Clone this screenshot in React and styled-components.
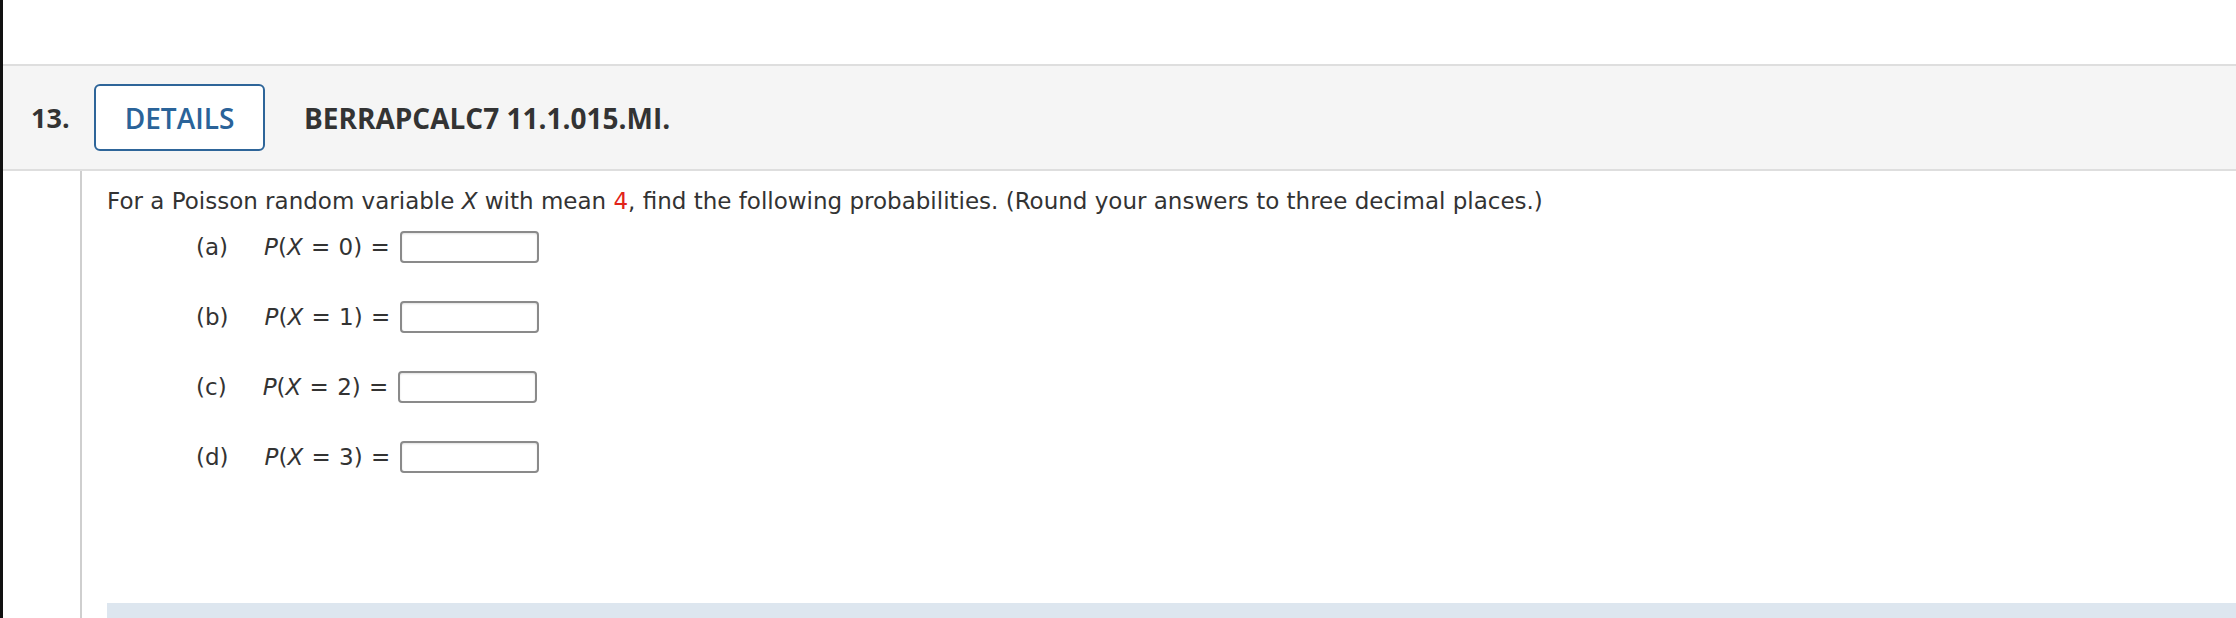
import React from "react";
import styled, { createGlobalStyle } from "styled-components";

const Global = createGlobalStyle`
  html, body { margin: 0; padding: 0; background: #fff; }
  body { font-family: "DejaVu Sans", Verdana, sans-serif; }
`;

const Page = styled.div`
  display: flex;
  height: 618px;
  overflow: hidden;
`;

const EdgeBar = styled.div`
  width: 3px;
  flex: 0 0 3px;
  background: #111;
`;

const Main = styled.div`
  flex: 1;
  display: flex;
  flex-direction: column;
  padding-top: 64px;
  min-width: 0;
`;

const Header = styled.div`
  display: flex;
  align-items: center;
  height: 103px;
  background: #f5f5f5;
  border-top: 2px solid #dedede;
  border-bottom: 2px solid #dedede;
  padding-left: 28px;
  font-family: "Open Sans", sans-serif;
  color: #333;
`;

const Number = styled.span`
  font-size: 27px;
  font-weight: 700;
  width: 63px;
`;

const DetailsButton = styled.button`
  box-sizing: border-box;
  width: 171px;
  height: 67px;
  border: 2px solid #2e6599;
  border-radius: 6px;
  background: #fff;
  color: #2a6399;
  font-family: "Open Sans", sans-serif;
  font-size: 28px;
  font-weight: 600;
  padding: 0;
  margin-right: 39px;
`;

const Title = styled.span`
  font-size: 28px;
  font-weight: 700;
`;

const Body = styled.div`
  flex: 1;
  display: flex;
  min-height: 0;
`;

const Gutter = styled.div`
  width: 77px;
  flex: 0 0 77px;
  border-right: 2px solid #cfcfcf;
`;

const Content = styled.div`
  flex: 1;
  display: flex;
  flex-direction: column;
  padding: 15px 0 0 25px;
  color: #333;
  font-size: 23px;
`;

const Prompt = styled.p`
  margin: 0;
  line-height: 30px;
  white-space: nowrap;
`;

const Red = styled.span`
  color: #e2231a;
`;

const Var = styled.i`
  font-style: italic;
`;

const Parts = styled.div`
  display: flex;
  flex-direction: column;
  gap: 38px;
  margin-top: 15px;
  padding-left: 89px;
`;

const Part = styled.div`
  display: flex;
  align-items: center;
  height: 32px;
  white-space: pre;
`;

const PartLabel = styled.span`
  margin-right: 36px;
`;

const Expression = styled.span`
  word-spacing: 1px;
`;

const AnswerBox = styled.input`
  box-sizing: border-box;
  width: 139px;
  height: 32px;
  margin-left: 10px;
  border: 2px solid #8a8a8a;
  border-radius: 4px;
  background: #fff;
  box-shadow: inset 0 1px 2px rgba(0, 0, 0, 0.12);
`;

const Band = styled.div`
  margin-top: auto;
  height: 15px;
  background: #dde6ef;
`;

const parts = [
  ["a", "0"],
  ["b", "1"],
  ["c", "2"],
  ["d", "3"],
];

export default function App() {
  return (
    <>
      <Global />
      <Page>
        <EdgeBar />
        <Main>
          <Header>
            <Number>13.</Number>
            <DetailsButton>DETAILS</DetailsButton>
            <Title>BERRAPCALC7 11.1.015.MI.</Title>
          </Header>
          <Body>
            <Gutter />
            <Content>
              <Prompt>
                For a Poisson random variable <Var>X</Var> with mean <Red>4</Red>, find the
                following probabilities. (Round your answers to three decimal places.)
              </Prompt>
              <Parts>
                {parts.map(([l, n]) => (
                  <Part key={l}>
                    <PartLabel>({l})</PartLabel>
                    <Expression>
                      <Var>P</Var>(<Var>X</Var> = {n}) =
                    </Expression>
                    <AnswerBox type="text" />
                  </Part>
                ))}
              </Parts>
              <Band />
            </Content>
          </Body>
        </Main>
      </Page>
    </>
  );
}
